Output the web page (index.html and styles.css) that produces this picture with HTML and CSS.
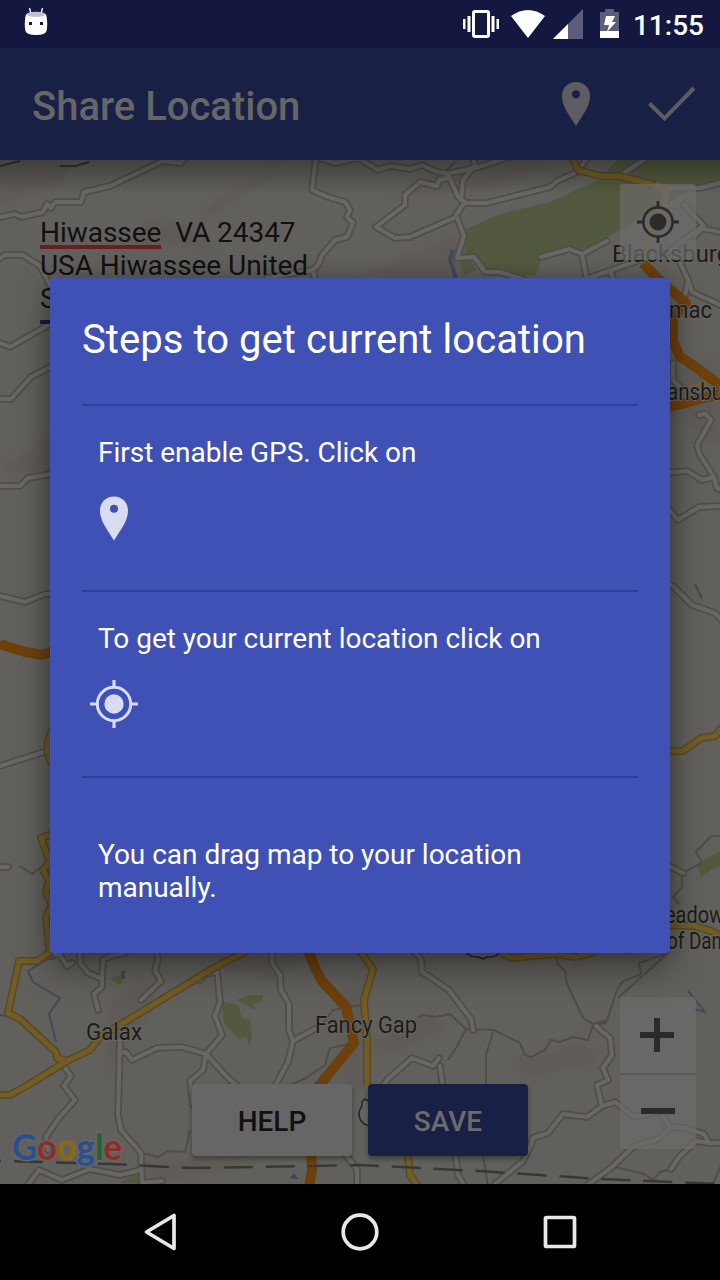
FILE: index.html
```html
<!DOCTYPE html>
<html lang="en">
<head>
<meta charset="utf-8">
<title>Share Location</title>
<link rel="stylesheet" href="styles.css">
</head>
<body>
<svg class="defs" width="0" height="0" aria-hidden="true">
  <symbol id="pin" viewBox="0 0 28 44"><path fill-rule="evenodd" d="M14 0C6 0 0 6 0 14c0 10 6 17 14 30 8-13 14-20 14-30C28 6 22 0 14 0zm0 8.200a4 4 0 1 1 0 8 4 4 0 0 1 0-8z"/></symbol>
  <symbol id="target" viewBox="0 0 48 48"><circle cx="24" cy="24" r="9.700"/><path d="M22.400 0h3.200v7h-3.200zM22.400 41h3.200v7h-3.200zM0 22.400h7v3.200H0zM41 22.400h7v3.200h-7z"/><circle cx="24" cy="24" r="16.700" fill="none" stroke="currentColor" stroke-width="3"/></symbol>
</svg>
<div class="screen">
  <header class="status">
    <svg class="droid" viewBox="0 0 24 30"><path d="M5.500 1l1.500 6M18.500 1L17 7" stroke="#fff" stroke-width="1.300"/><path d="M1.500 9Q2 5 12 5t10.500 4q1.500 9 0 15-1 4-10.500 4T1.500 24Q0 18 1.500 9z" fill="#fff"/><ellipse cx="12" cy="7.300" rx="9.200" ry="2.600" fill="#bfc0cf"/><path d="M5 15h3v3H5zM16 15h3v3h-3z" fill="#141840"/></svg>
    <svg class="tray" viewBox="460 0 164 48" fill="#fff"><path d="M463 19h2.500v10H463zM467.500 16h3v16h-3zM491.500 16h3v16h-3zM496.500 19h2.500v10h-2.500z"/><rect x="473.500" y="11.500" width="15" height="25" rx="1.500" fill="none" stroke="#fff" stroke-width="3"/><path d="M511 16Q528 4 545 16L528 38z"/><path d="M583 9v30h-30z" fill="#5b5d79"/><path d="M568 24v15h-15z"/><path d="M605 9h9v3h5v26h-19V12h5z" fill="#5b5d79"/><path d="M600 31h19v7h-19z"/><path d="M606 16h9l-3 6h4l-9 10 2-7h-5z"/></svg>
    <span class="clock">11:55</span>
  </header>
  <div class="appbar">
    <h1>Share Location</h1>
    <svg class="bar-pin"><use href="#pin"/></svg>
    <svg class="check" viewBox="0 0 48 36"><path d="M1.500 17.500L16.500 32.500 46 2" fill="none" stroke="#5d5c63" stroke-width="4"/></svg>
  </div>
  <main class="map">
    <svg class="tiles" viewBox="0 160 720 1024">
      <defs>
        <g id="roads">
          <path d="M0 217L15 214 22 217 43 212 47 204 51 208 55 202H81L84 192 110 186 163 161 180 163 186 157"/>
          <path d="M316 157L312 190 328 197 345 202 350 210 347 217 353 223 347 237 335 240 322 255 319 264 313 270 316 285M313 270L267 278M316 157L335 163 358 158 378 170 390 166 410 169 422 165 435 171 448 174 458 197 465 202 456 215 464 236 457 258 474 257 485 272 500 272 525 280"/>
          <path d="M0 258L5 255H23L40 266 50 285M473 157L475 165 463 180 461 200M450 173L475 168 510 157M448 178L439 180 437 186 420 182 405 195V205L376 227 395 238 410 237 456 217M465 203H487L550 187 557 181 577 172 588 157M621 175L648 157"/>
          <path d="M541 257L569 249 582 254 607 241M582 254L587 280M589 278L640 260M611 273L615 283M665 188L700 188 720 183M684 205L704 226 695 236M660 258L700 228 720 232M679 260L688 280 692 292 720 305M688 280L684 300"/>
          <path d="M0 343L10 347 52 323M0 399H11L31 377 52 366M0 486H20L28 478 52 474M0 596L25 602 45 594H55M0 766L47 751M0 867H8"/>
          <path d="M673 363V380L681 388M699 415L706 414 711 420 697 445 700 455 714 477 717 488 725 492M665 473L687 471 702 480 714 477M665 505L678 520 699 507 720 506M665 582L673 586 692 605 715 613 725 624M667 865L683 873"/>
          <path d="M50 953L60 955 67 966 72 963M80 948V963L88 973 102 979 103 960 110 956 125 953M102 979V987L94 994 98 1010M156 948L158 960 155 971 161 981 141 1000M200 980L205 975 217 971 220 1002 215 1016 222 1035 206 1054 228 1078 240 1088M120 1040L118 1115 121 1130 141 1153 142 1184M119 1053L126 1052 132 1060 157 1048 182 1047 206 1054 203 1070 190 1081 193 1105M272 948V963L280 975 281 990 289 1004V1030L293 1041 288 1062 274 1088M293 1041L315 1029M63 1065L71 1076 64 1086 75 1100 58 1119 46 1137 48 1150"/>
          <path d="M25 1189L39 1170 62 1180 90 1169 120 1175 141 1170M142 1183L162 1181M411 948L421 959 422 972 449 990 471 1019 473 1030M380 1090L388 1079 412 1058 433 1066 439 1058M440 1066L443 1088M596 1026L610 1038 612 1055 603 1068 608 1080 597 1085 602 1106 615 1102 634 1117 660 1111 670 1127 686 1128 704 1134 709 1143H720M602 1106L587 1117 563 1114 548 1133 533 1138 530 1147 523 1161 495 1184M709 1143L696 1141 679 1157 671 1169M670 1128L658 1139 634 1146 612 1167 586 1186M455 1150L458 1175 465 1187M345 1154L357 1169V1184"/>
        </g>
        <g id="yellow"><path d="M572 157L578 170 600 176H620L655 185M665 751H683L701 738 715 736 724 725M52 730Q43 750 52 763M55 833L41 838 50 862 43 870 49 880 46 893 52 904 46 918 50 952 37 961H19L8 1013 20 1019 56 1052 57 1058 67 1061 90 1050 100 1037 212 969 248 950M67 1061L28 1085 10 1095H0M358 948L373 969 364 1000 367 1042V1085M408 1156L410 1175 419 1188M502 953L511 958 555 954 576 957 595 952M665 925L695 926 714 932 724 938"/></g>
        <g id="orange"><path d="M643 263L656 277 686 303 673 318 673 341 680 357 687 361 724 388M665 408L724 393M0 644L25 652 43 655 55 650M307 948L316 970 322 981 346 1007 354 1043 314 1092M311 1150L312 1170 309 1188"/></g>
        <linearGradient id="topfade" x2="0" y2="1"><stop stop-color="#000" stop-opacity=".33"/><stop offset="1" stop-color="#000" stop-opacity="0"/></linearGradient>
        <filter id="soft"><feGaussianBlur stdDeviation="3"/></filter>
      </defs>
      <rect y="160" width="720" height="1024" fill="#62605c"/>
      <g fill="#5b5653" opacity=".5" filter="url(#soft)"><path d="M0 170L70 162 63 185 0 205zM150 220L200 232 220 250 130 242zM198 212L222 196 250 180 284 157 250 190 215 215zM30 450L55 432V480L0 468zM110 1000L145 980 158 1004 120 1050 104 1080zM215 958H300L275 980 230 972zM370 1045L430 1012 449 1028 396 1052zM510 1063L545 1055 582 1040 600 1062 530 1076zM440 280L500 235 450 238 360 275zM385 197L440 171 550 164 490 188zM145 1163L245 1158 226 1172 155 1180zM340 990L365 980V1090H345zM690 360H720V450L665 410z"/></g>
      <g fill="#53593f"><path d="M466 229L500 214 550 202 600 179 620 157H720V179L695 187 620 230 589 247 542 257 536 275 518 277 500 270 486 270 474 256 458 258 464 275 477 270 465 253zM221 1001L238 1005 242 1018 250 1019 252 1035 249 1048 247 1037 239 1039 224 1023zM237 1000L250 995H263V1001L254 1004 255 1010zM109 978L124 975 121 985 117 984zM697 864L720 851V865L701 877zM120 1183L132 1176 140 1177 142 1184z"/></g>
      <path fill="none" stroke="#404a5b" stroke-width="4" d="M453 250L450 259 456 279M123 971V979"/>
      <path fill="none" stroke="#434b59" stroke-width="2" d="M55 959H48L28 971 33 982 60 998 49 1014 56 1042M0 1015L15 1018 28 1029M688 991L698 1003 705 1012 694 1009M447 170L455 162M695 584L702 599"/>
      <g fill="none" stroke="#504d46" stroke-width="2"><path d="M20 866L32 874 40 868 50 872M50 662L60 660M142 1153L158 1157 168 1151 185 1152 190 1130M418 1018L423 1015 435 1017 450 1014 466 1029 494 1030 520 1043 525 1055 531 1057 545 1050 551 1040 560 1042 573 1037 588 1040 593 1025 606 1023 617 990 622 982 641 974 639 963 668 953M493 1032L486 1055V1088M466 1029L456 1048 448 1060M557 953V963L565 971 567 984 583 1018 593 1024 608 1020M618 998L669 952M682 873L682 887 673 897 680 905M682 873L702 863 696 852 711 836H720M274 1092L304 1079 325 1065 330 1048 350 1044M322 1025L333 1010 360 1005M615 1167L644 1174 653 1180 660 1172 671 1169M712 1186L724 1158M483 1156L488 1186"/></g>
      <g fill="none" stroke="#514e48" stroke-width="7.500" stroke-linejoin="round" stroke-linecap="round"><use href="#roads"/></g>
      <g fill="none" stroke="#686765" stroke-width="4" stroke-linejoin="round" stroke-linecap="round"><use href="#roads"/></g>
      <g fill="none" stroke="#574b26" stroke-width="8" stroke-linejoin="round"><use href="#yellow"/></g>
      <g fill="none" stroke="#725d27" stroke-width="5" stroke-linejoin="round"><use href="#yellow"/></g>
      <path fill="none" stroke="#79603c" stroke-width="7" stroke-linejoin="round" d="M655 185L667 190 664 205 650 235 643 263"/>
      <path fill="none" stroke="#776026" stroke-width="5" d="M690 388L724 376"/>
      <g fill="none" stroke="#65430f" stroke-width="10" stroke-linejoin="round"><use href="#orange"/></g>
      <g fill="none" stroke="#70400b" stroke-width="7" stroke-linejoin="round"><use href="#orange"/></g>
      <path fill="none" stroke="#373737" stroke-width="2.500" stroke-dasharray="29 13" d="M-28 1160L110 1164 190 1168 360 1165 480 1171 600 1179 720 1184"/>
      <path fill="none" stroke="#34322e" stroke-width="2" d="M60 166H76L89 162M0 166L20 161"/>
      <path fill="#666565" stroke="#242424" stroke-width="1.500" d="M362 1102L365 1099 370 1102V1126Q359 1124 359 1113 359 1110 362 1106zM465 950Q469 958 479 957L483 959 487 957Q497 958 501 950z"/>
      <path d="M290 1178L294 1173 298 1179z" fill="#36445f"/>
      <rect y="160" width="720" height="34" fill="url(#topfade)"/>
      <g class="place">
        <text x="612" y="262" textLength="118" lengthAdjust="spacingAndGlyphs">Blacksburg</text>
        <text x="669" y="318" textLength="43" lengthAdjust="spacingAndGlyphs">mac</text>
        <text x="667" y="400" textLength="56" lengthAdjust="spacingAndGlyphs">ansbu</text>
        <text x="665" y="923" textLength="59" lengthAdjust="spacingAndGlyphs">eadow</text>
        <text x="667" y="949" textLength="55" lengthAdjust="spacingAndGlyphs">of Dan</text>
        <text x="86" y="1040" textLength="56" lengthAdjust="spacingAndGlyphs">Galax</text>
        <text x="315" y="1033" textLength="102" lengthAdjust="spacingAndGlyphs">Fancy Gap</text>
      </g>
      <text class="google" x="12" y="1160" textLength="110" lengthAdjust="spacingAndGlyphs"><tspan fill="#294f90">G</tspan><tspan fill="#8e2d28">o</tspan><tspan fill="#8d680c">o</tspan><tspan fill="#294f90">g</tspan><tspan fill="#1b6533">l</tspan><tspan fill="#8e2d28">e</tspan></text>
    </svg>
    <div class="content">
      <div class="top">
        <p class="address"><span class="typo">Hiwassee</span>&nbsp; VA 24347<br>USA Hiwassee United<br><span class="link">States</span></p>
        <div class="locate"><svg class="locate-icon"><use href="#target"/></svg></div>
      </div>
      <div class="bottom">
        <div class="actions"><div class="btn help">HELP</div><div class="btn save">SAVE</div></div>
        <div class="zoom"><div class="step"><svg viewBox="0 0 34 34"><path d="M14 0h6v14h14v6H20v14h-6V20H0v-6h14z"/></svg></div><div class="step minus"><svg viewBox="0 0 34 34"><path d="M0 13h34v6H0z"/></svg></div></div>
      </div>
    </div>
  </main>
  <nav class="nav">
    <svg viewBox="0 0 48 48"><path d="M38 7.500v33L10.500 24z"/></svg>
    <svg viewBox="0 0 48 48"><circle cx="24" cy="24" r="16.800"/></svg>
    <svg viewBox="0 0 48 48"><rect x="9.500" y="9.500" width="29" height="29" rx="1"/></svg>
  </nav>
  <section class="dialog">
    <h2>Steps to get current location</h2>
    <div class="item"><p>First enable GPS. Click on</p><svg class="pin"><use href="#pin"/></svg></div>
    <div class="item"><p>To get your current location click on</p><svg class="target"><use href="#target"/></svg></div>
    <div class="item last"><p>You can drag map to your location manually.</p></div>
  </section>
</div>
</body>
</html>
```
FILE: styles.css
```css
* { box-sizing: border-box; }
body { margin: 0; font-family: Roboto, sans-serif; }
h1, h2, p { margin: 0; font-weight: 400; }
svg { display: block; }
.defs { position: absolute; }
.screen { position: relative; width: 720px; height: 1280px; overflow: hidden; display: flex; flex-direction: column; }
.status { height: 48px; background: #141840; display: flex; align-items: center; padding: 0 16px 0 24px; }
.droid { width: 24px; height: 30px; margin-right: 412px; margin-bottom: 4px; }
.tray { width: 164px; height: 48px; }
.clock { color: #fff; font-size: 28px; font-weight: 500; margin-left: auto; line-height: 48px; padding-top: 4px; }
.appbar { height: 112px; background: #192046; display: flex; align-items: center; padding: 0 24px 0 32px; }
.appbar h1 { flex: 1; font-size: 40px; font-weight: 500; color: #666; line-height: 48px; padding-top: 6px; }
.bar-pin { width: 28px; height: 44px; fill: #5d5c63; margin-right: 58px; }
.check { width: 48px; height: 36px; }
.map { position: relative; height: 1024px; }
.tiles { width: 720px; height: 1024px; }
.place { font-size: 24px; fill: #1d1c18; stroke: #676562; stroke-width: 2px; paint-order: stroke; }
.google { font: 700 37px Lato, sans-serif; stroke: #676562; stroke-width: 3px; paint-order: stroke; }
.content { position: absolute; inset: 0; display: flex; flex-direction: column; justify-content: space-between; padding: 24px 24px 28px; }
.top { display: flex; justify-content: space-between; align-items: flex-start; }
.address { padding: 32px 0 0 16px; font-size: 28px; line-height: 33px; color: #111; letter-spacing: -.04px; }
.typo, .link { display: inline-block; height: 33px; border-bottom: 4px solid #691f1f; }
.link { height: 42px; border-color: #161c44; }
.locate { width: 76px; height: 76px; border-radius: 3px; background: rgba(108, 108, 108, .68); display: flex; justify-content: center; align-items: center; }
.locate-icon { width: 42px; height: 42px; color: #2b2b2b; fill: #2b2b2b; }
.bottom { display: flex; justify-content: flex-end; align-items: flex-end; gap: 92px; height: 160px; }
.actions { display: flex; gap: 16px; }
.btn { width: 160px; height: 72px; border-radius: 4px; font-size: 28px; font-weight: 500; line-height: 76px; text-align: center; box-shadow: 0 3px 5px rgba(0, 0, 0, .35); }
.help { background: #666; color: #111; }
.save { background: #192046; color: #6d6c6b; }
.zoom { width: 76px; margin-bottom: 7px; border-radius: 3px; background: rgba(108, 108, 108, .68); }
.step { height: 76px; display: flex; justify-content: center; align-items: center; }
.step svg { width: 34px; height: 34px; fill: #2b2b2b; margin-right: 2px; }
.minus { border-top: 2px solid #5b5a58; }
.minus svg { margin: 0; }
.nav { height: 96px; background: #000; display: flex; justify-content: center; align-items: center; gap: 152px; }
.nav svg { width: 48px; height: 48px; fill: none; stroke: #e8e8e8; stroke-width: 3.700; stroke-linejoin: round; }
.dialog { position: absolute; left: 50px; top: 278px; width: 620px; height: 675px; padding: 0 32px; border-radius: 4px; background: #3f51b5; color: #fff; box-shadow: 0 16px 36px rgba(0, 0, 0, .38), 0 0 18px rgba(0, 0, 0, .22); }
.dialog h2 { height: 126px; font-size: 40px; line-height: 48px; padding-top: 38px; white-space: nowrap; letter-spacing: .06px; }
.item { height: 186px; border-top: 2px solid #303f9f; padding: 30px 16px 0; font-size: 28px; line-height: 33px; }
.item p { height: 33px; letter-spacing: -.02px; }
.pin { width: 28px; height: 45px; margin: 27px 0 0 2px; fill: #d9dcf0; }
.target { width: 48px; height: 48px; margin: 25px 0 0 -8px; fill: #d9dcf0; color: #d9dcf0; }
.last { height: auto; padding-top: 60px; }
```
